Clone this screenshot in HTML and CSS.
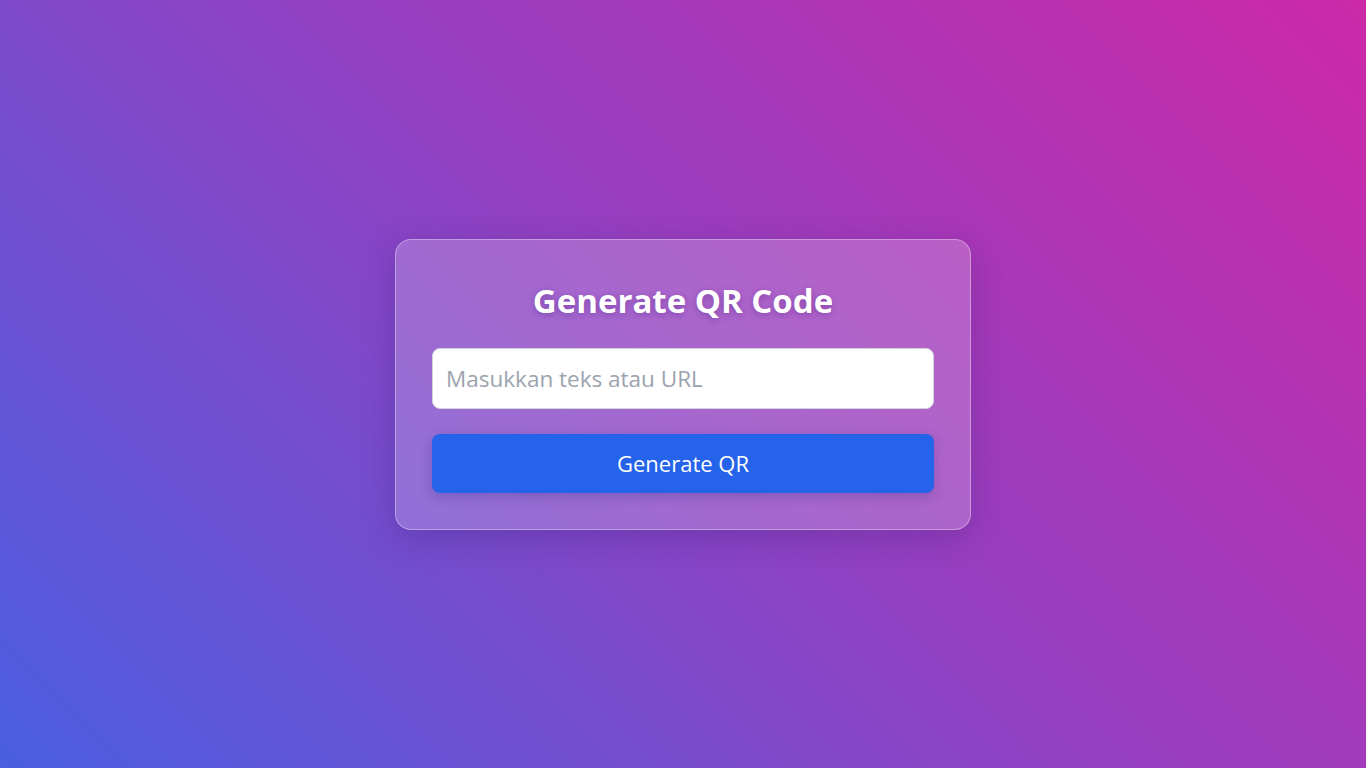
FILE: index.html
```html
<!DOCTYPE html>
<html lang="id">
<head>
<meta charset="utf-8">
<title>Generate QR Code</title>
<link rel="stylesheet" href="styles.css">
</head>
<body>
<main class="page">
  <div class="card">
    <h1 class="title">Generate QR Code</h1>
    <input class="field" type="text" placeholder="Masukkan teks atau URL">
    <button class="btn" type="button">Generate QR</button>
  </div>
</main>
</body>
</html>
```

FILE: styles.css
```css
* { box-sizing: border-box; }
html, body { margin: 0; height: 100%; }
body {
  font-family: "Open Sans", "Noto Sans", "Liberation Sans", sans-serif;
  background: linear-gradient(45deg, #4a5ee0 0%, #9141c2 50%, #cc29a8 100%);
  min-height: 100vh;
}
.page {
  min-height: 100vh;
  display: flex;
  align-items: center;
  justify-content: center;
}
.card {
  width: 576px;
  padding: 36px;
  border-radius: 16px;
  background: rgba(255, 255, 255, 0.2);
  border: 1px solid rgba(255, 255, 255, 0.35);
  box-shadow: 0 8px 32px rgba(40, 20, 100, 0.25);
  display: flex;
  flex-direction: column;
}
.title {
  margin: 5px 0 27px;
  text-align: center;
  color: #fff;
  font-size: 33px;
  font-weight: 700;
  line-height: 40px;
  letter-spacing: 0;
  text-shadow: 0 2px 6px rgba(60, 20, 120, 0.35);
}
.field {
  width: 100%;
  height: 61px;
  padding: 0 13px;
  font-family: inherit;
  font-size: 22.5px;
  color: #333;
  background: #fff;
  border: 1px solid #d1d5db;
  border-radius: 8px;
  outline: none;
}
.field::placeholder { color: #9ca3af; }
.btn {
  margin-top: 25px;
  width: 100%;
  height: 59px;
  font-family: inherit;
  font-size: 22px;
  color: #fff;
  background: #2563eb;
  border: none;
  border-radius: 8px;
  box-shadow: 0 4px 12px rgba(30, 40, 120, 0.25);
  cursor: pointer;
}
```
